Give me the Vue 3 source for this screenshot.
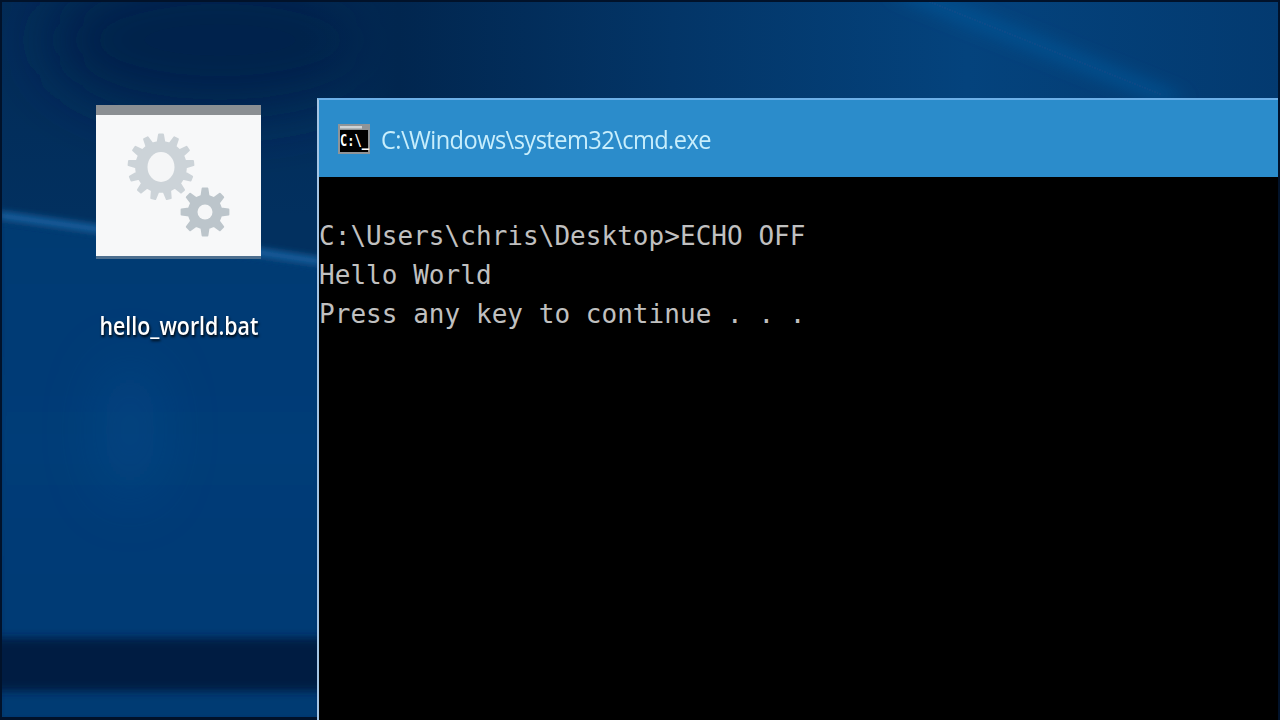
<script setup>
function gear(cx, cy, outer, root, teeth) {
  const pts = []
  const step = (Math.PI * 2) / teeth
  const p = (r, t) => `${(cx + r * Math.cos(t)).toFixed(1)} ${(cy + r * Math.sin(t)).toFixed(1)}`
  for (let i = 0; i < teeth; i++) {
    const a = i * step - Math.PI / 2
    pts.push(p(root, a - step * 0.27), p(outer, a - step * 0.13), p(outer, a + step * 0.13), p(root, a + step * 0.27))
  }
  return 'M' + pts.join('L') + 'Z'
}
const bigGear = gear(161, 167, 32.5, 25, 13)
const smallGear = gear(205, 212, 23.5, 16.5, 8)
</script>

<template>
  <div class="desktop">
    <svg class="wallpaper" viewBox="0 0 1280 720" preserveAspectRatio="none" aria-hidden="true">
      <defs>
        <linearGradient id="upper" x1="0" y1="0" x2="0" y2="1">
          <stop offset="0" stop-color="#022b57" />
          <stop offset="0.3" stop-color="#02305f" />
          <stop offset="1" stop-color="#02305f" />
        </linearGradient>
        <linearGradient id="topBand" gradientUnits="userSpaceOnUse" x1="300" y1="0" x2="1280" y2="0">
          <stop offset="0" stop-color="#01264f" stop-opacity="0" />
          <stop offset="0.1" stop-color="#01264f" />
          <stop offset="0.38" stop-color="#033567" />
          <stop offset="0.68" stop-color="#04437d" />
          <stop offset="1" stop-color="#033a70" />
        </linearGradient>
        <linearGradient id="lower" x1="0" y1="0" x2="0" y2="1">
          <stop offset="0" stop-color="#023a72" />
          <stop offset="0.45" stop-color="#033c78" />
          <stop offset="1" stop-color="#033a73" />
        </linearGradient>
        <filter id="blur2" x="-20%" y="-50%" width="140%" height="200%"><feGaussianBlur stdDeviation="2" /></filter>
        <filter id="blur3" x="-20%" y="-100%" width="140%" height="300%"><feGaussianBlur stdDeviation="3" /></filter>
        <filter id="blur4" x="-20%" y="-50%" width="140%" height="200%"><feGaussianBlur stdDeviation="4" /></filter>
        <filter id="blur9" x="-20%" y="-50%" width="140%" height="200%"><feGaussianBlur stdDeviation="9" /></filter>
        <filter id="blur30" x="-200%" y="-100%" width="500%" height="300%"><feGaussianBlur stdDeviation="30" /></filter>
      </defs>
      <rect width="1280" height="720" fill="url(#upper)" />
      <ellipse cx="220" cy="40" rx="170" ry="70" fill="#01244c" filter="url(#blur30)" />
      <rect x="300" width="980" height="100" fill="url(#topBand)" />
      <polygon points="885,-10 915,-10 1190,100 1160,100" fill="#0a5798" filter="url(#blur9)" />
      <polygon points="0,222 100,235 320,266 320,720 0,720" fill="url(#lower)" filter="url(#blur3)" />
      <polygon points="0,211 100,225 320,257 320,266 100,234 0,220" fill="#155d9c" filter="url(#blur3)" />
      <ellipse cx="130" cy="430" rx="28" ry="70" fill="#0b5596" opacity="0.35" filter="url(#blur30)" />
      <rect x="-20" y="638" width="360" height="53" fill="#011d42" filter="url(#blur4)" />
      <rect width="2" height="720" fill="#01122a" />
      <rect width="1280" height="2" fill="#01122a" />
      <rect y="717" width="320" height="3" fill="#01122a" />
      <rect x="1278" width="2" height="720" fill="#01122a" />
    </svg>

    <div class="file">
      <div class="thumb">
        <svg class="gears" viewBox="96 110 165 148" aria-hidden="true">
          <path :d="bigGear" fill="#ccd3d8" stroke="#ccd3d8" stroke-width="2" stroke-linejoin="round" />
          <ellipse cx="161" cy="167" rx="13.5" ry="15" fill="#f5f6f7" />
          <path :d="smallGear" fill="#bcc5cb" stroke="#bcc5cb" stroke-width="2" stroke-linejoin="round" />
          <circle cx="205" cy="212" r="7.5" fill="#f6f7f8" />
        </svg>
      </div>
      <div class="file-name">hello_world.bat</div>
    </div>

    <section class="window">
      <header class="title-bar">
        <svg class="cmd-icon" width="32" height="30" viewBox="0 0 32 30" aria-hidden="true">
          <rect width="32" height="30" fill="#8f9498" />
          <rect x="2" y="6" width="28" height="22" fill="#000" />
          <rect x="2" y="2" width="22" height="2.5" fill="#cfd3d6" />
          <text x="2" y="18" class="cmd-glyph" transform="scale(1 1.25)">C:\_</text>
        </svg>
        <span class="title">C:\Windows\system32\cmd.exe</span>
      </header>
      <pre class="console">C:\Users\chris\Desktop>ECHO OFF
Hello World
Press any key to continue . . .</pre>
    </section>
  </div>
</template>

<style>
html, body { margin: 0; padding: 0; background: #000; }
</style>

<style scoped>
.desktop {
  position: relative;
  width: 1280px;
  height: 720px;
  overflow: hidden;
  background: #023a70;
}
.wallpaper {
  position: absolute;
  inset: 0;
  width: 1280px;
  height: 720px;
}
.file {
  position: absolute;
  left: 96px;
  top: 105px;
  width: 165px;
  display: flex;
  flex-direction: column;
  align-items: center;
}
.thumb {
  box-sizing: border-box;
  position: relative;
  width: 165px;
  height: 154px;
  background: #f7f8f9;
  border-top: 10px solid #8b8f93;
  border-bottom: 3px solid #4d6f8f;
}
.gears {
  position: absolute;
  left: 0;
  top: -5px;
  width: 165px;
  height: 148px;
}
.file-name {
  margin-top: 51px;
  font-family: "Open Sans", sans-serif;
  font-size: 25px;
  font-weight: 600;
  line-height: 30px;
  color: #fff;
  white-space: nowrap;
  text-shadow: 1px 2px 3px #000;
  transform: scaleX(0.855);
}
.window {
  position: absolute;
  left: 317px;
  top: 98px;
  width: 961px;
  height: 622px;
  box-sizing: border-box;
  border-left: 2px solid #a5c5e4;
  border-top: 2px solid #6db0e8;
  display: flex;
  flex-direction: column;
  background: #000;
}
.title-bar {
  flex: none;
  height: 77px;
  background: #2b8ccb;
  display: flex;
  align-items: center;
  gap: 11px;
  padding-left: 19px;
}
.cmd-icon { flex: none; }
.cmd-glyph {
  font-family: "DejaVu Sans Mono", monospace;
  font-size: 12px;
  font-weight: 700;
  fill: #fff;
}
.title {
  font-family: "Open Sans", sans-serif;
  font-size: 25px;
  line-height: 30px;
  color: #c8eefc;
  white-space: nowrap;
  letter-spacing: -0.6px;
  transform: scaleX(0.945);
  transform-origin: left center;
}
.console {
  margin: 0;
  padding-top: 40px;
  font-family: "DejaVu Sans Mono", monospace;
  font-size: 26px;
  line-height: 39px;
  letter-spacing: 0.04px;
  color: #c0c0c0;
}
</style>
